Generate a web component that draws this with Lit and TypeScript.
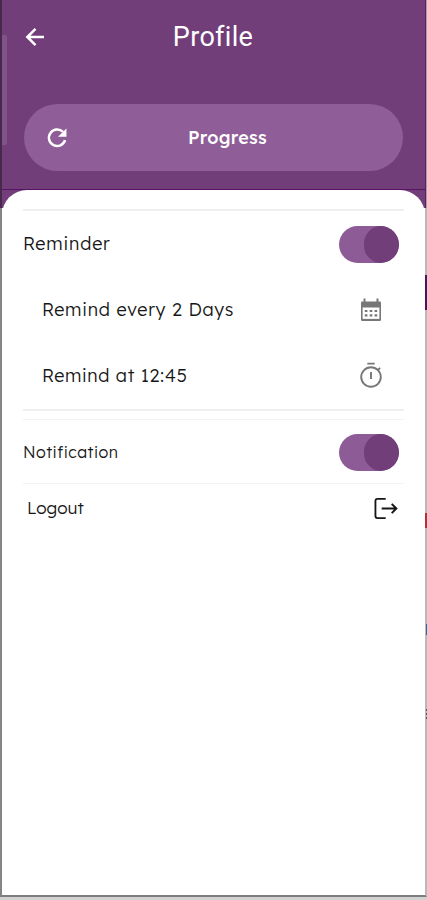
import { LitElement, html, css, svg } from "lit";
import { customElement, property } from "lit/decorators.js";

@customElement("toggle-switch")
class ToggleSwitch extends LitElement {
  static styles = css`
    :host { display: flex; justify-content: flex-end; width: 60px; height: 37px; border-radius: 19px; overflow: hidden;
      background: #8d5b95; }
    .knob { width: 35px; height: 37px; border-radius: 18px; background: #723e79; }
  `;
  render() { return html`<div class="knob"></div>`; }
}

const shapes: Record<string, unknown> = {
  back: svg`<path d="M21 12H5M12.5 3.8 4.3 12l8.2 8.2" stroke-width="2.5"/>`,
  refresh: svg`<path d="M18.6 5.4A9 9 0 1 0 20.8 14.4" stroke-width="2.7"/><path d="M22.3 1.5v9.2h-9.2z" fill="currentColor" stroke="none"/>`,
  calendar: svg`<path d="M3.2 3.5h17.6q1.2 0 1.2 1.2v17.1q0 1.2-1.2 1.2H3.2Q2 23 2 21.8V4.7q0-1.2 1.2-1.2z" fill="currentColor" stroke="none"/><path d="M3.6 9.5h16.8v11.4H3.6z" fill="#fff" stroke="none"/><path d="M5.5 .5v4M18.5 .5v4" stroke-width="2"/><path d="M5.8 13h2.6M10.7 13h2.6M15.6 13h2.6M5.8 17.3h2.6M10.7 17.3h2.6M15.6 17.3h2.6" stroke-width="2.2"/>`,
  timer: svg`<circle cx="12" cy="13" r="9.8" stroke-width="1.9"/><path d="M8.3 -.4h7.4M12 8v7M18.9 6l2.2-2.2" stroke-width="1.9"/>`,
  logout: svg`<path d="M12.2 2H3.6Q1.5 2 1.5 4.1V19.9Q1.5 22 3.6 22H12.2" stroke-width="1.9"/><path d="M8 12H23M18.5 7.2 23.3 12 18.5 16.8" stroke-width="2.1"/>`,
};

@customElement("line-icon")
class LineIcon extends LitElement {
  static properties = { name: { type: String } };
  @property() declare name: string;
  static styles = css`
    :host { display: block; width: 24px; height: 24px; }
    svg { display: block; width: 100%; height: 100%; overflow: visible; fill: none; stroke: currentColor; }
  `;
  render() { return html`<svg viewBox="0 0 24 24">${shapes[this.name]}</svg>`; }
}

@customElement("app-root")
class AppRoot extends LitElement {
  static styles = css`
    :host { display: block; position: relative; width: 427px; height: 900px; overflow: hidden; box-sizing: border-box;
      background: #d2d2d2; color: #161616; font-family: Lexend, Inter, sans-serif; }
    * { box-sizing: border-box; }
    .screen { height: 897px; display: flex; flex-direction: column; border-left: 2px solid #858585;
      border-right: 2px solid #b9b9b9; border-bottom: 2px solid #7d7d7d;
      background: linear-gradient(#723e79 0 208px, #fff 208px); }
    .header { height: 190px; padding: 0 22px; border-bottom: 1px solid #581265; color: #fff; }
    .bar { height: 74px; display: grid; grid-template-columns: 24px 1fr 25px; align-items: center; }
    .bar line-icon { width: 24px; height: 24px; margin-left: -1px; }
    .title { text-align: center; font: 400 27px/32px Roboto, sans-serif; letter-spacing: 0.3px; }
    .progress { margin-top: 30px; height: 67px; border-radius: 34px; background: #8f5d97; display: grid;
      grid-template-columns: 24px 1fr; align-items: center; padding: 0 18px 0 22px; }
    .progress line-icon { width: 22px; height: 22px; }
    .progress .label { text-align: center; font-size: 18px; font-weight: 500; letter-spacing: 0.25px; }
    .sheet { flex: 1; background: #fff; border-radius: 25px 25px 0 0; padding: 19px 21px 0; }
    .rule { height: 2px; background: #efefef; }
    .thin { height: 1px; background: #f3f3f3; }
    .row { height: 66px; display: flex; align-items: center; justify-content: space-between; padding-right: 5px; }
    .label { font-size: 18px; line-height: 24px; white-space: nowrap; }
    .sheet .label { font-weight: 300; }
    .reminder { letter-spacing: 0.82px; }
    .inset { padding: 0 21px 0 19px; }
    .inset line-icon { color: #777; }
    .days { letter-spacing: 0.74px; }
    .time { letter-spacing: 0.65px; }
    .gap { height: 8px; }
    .notify { height: 63px; padding-top: 1px; }
    .notify .label { font-size: 16px; letter-spacing: 0.45px; }
    .logout { height: 48px; padding: 0 7px 0 4px; }
    .logout .label { font-size: 17px; letter-spacing: 0; }
    .logout line-icon { width: 23px; height: 23px; }
    .edge { position: absolute; }
    .shade { left: 0; top: 0; width: 2px; height: 208px; background: #46294d; }
    .handle { left: 2px; top: 35px; width: 5px; height: 110px; border-radius: 0 2px 2px 0; background: #805487; }
    .side { right: 0; top: 0; width: 2px; height: 208px; background: linear-gradient(90deg, #592163 50%, #aaa0ad 50%); }
    .mark { right: 0; width: 2px; }
    .violet { top: 275px; height: 35px; background: #4d145e; }
    .red { top: 513px; height: 15px; background: #b5303a; }
    .blue { top: 624px; height: 11px; width: 1px; background: #266da3; }
    .dots { top: 709px; height: 11px; width: 1px; background: repeating-linear-gradient(#555 0 2px, #bbb 2px 4px); }
  `;
  render() {
    return html`
      <div class="screen">
        <div class="header">
          <div class="bar"><line-icon name="back"></line-icon><div class="title">Profile</div></div>
          <div class="progress"><line-icon name="refresh"></line-icon><div class="label">Progress</div></div>
        </div>
        <div class="sheet">
          <div class="rule"></div>
          <div class="row"><span class="label reminder">Reminder</span><toggle-switch></toggle-switch></div>
          <div class="row inset"><span class="label days">Remind every 2 Days</span><line-icon name="calendar"></line-icon></div>
          <div class="row inset"><span class="label time">Remind at 12:45</span><line-icon name="timer"></line-icon></div>
          <div class="rule"></div>
          <div class="gap"></div>
          <div class="thin"></div>
          <div class="row notify"><span class="label">Notification</span><toggle-switch></toggle-switch></div>
          <div class="thin"></div>
          <div class="row logout"><span class="label">Logout</span><line-icon name="logout"></line-icon></div>
        </div>
      </div>
      <div class="edge shade"></div><div class="edge handle"></div><div class="edge side"></div>
      <div class="edge mark violet"></div><div class="edge mark red"></div>
      <div class="edge mark blue"></div><div class="edge mark dots"></div>
    `;
  }
}
